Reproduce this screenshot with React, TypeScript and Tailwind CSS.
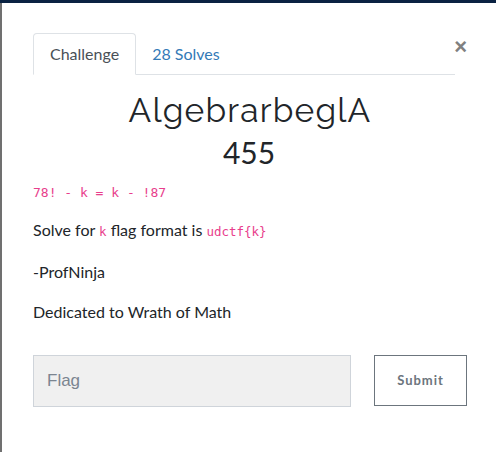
import React from "react";

export default function App() {
  return (
    <div className="w-[496px] h-[452px] bg-white flex flex-col overflow-hidden" style={{ fontFamily: "Lato, 'Noto Sans', sans-serif" }}>
      <div className="h-[3px] w-full bg-[#0a2242] shrink-0" />
      <div className="flex-1 flex border-l-2 border-[#707070]">
        <div className="flex-1 flex flex-col pl-[31px] pr-[30px] pt-[30px]">
          <div className="flex items-start">
            <div className="flex flex-1 border-b border-[#dee2e6] h-[42px]">
              <div className="h-[42px] px-[16px] flex items-center border border-[#dee2e6] border-b-white rounded-t-[4px] bg-white text-[#495057] text-[16px] -mb-px">
                Challenge
              </div>
              <div className="h-[41px] px-[16px] flex items-center text-[#337ab7] text-[16px]">
                28 Solves
              </div>
            </div>
            <div className="w-[12px] mt-[3px] text-[#808080] text-[22px] leading-none font-bold flex justify-end" style={{ fontFamily: "Arial, 'Liberation Sans', sans-serif" }}>
              ×
            </div>
          </div>
          <div className="text-center mt-[16px] text-[33.5px] leading-[40px] text-[#212529] tracking-[1.2px]" style={{ fontFamily: "Raleway, Lato, sans-serif" }}>
            AlgebrarbeglA
          </div>
          <div className="text-center text-[30px] leading-[36px] text-[#212529] mt-[3px] pr-[2px]">455</div>
          <div className="mt-[13px] text-[#e83e8c] text-[13px] leading-[20px]" style={{ fontFamily: "'DejaVu Sans Mono', monospace" }}>
            78! - k = k - !87
          </div>
          <p className="mt-[15px] text-[16px] leading-[24px] text-[#212529]">
            Solve for <code className="text-[#e83e8c] text-[12.5px]" style={{ fontFamily: "'DejaVu Sans Mono', monospace" }}>k</code> flag format is <code className="text-[#e83e8c] text-[12.5px]" style={{ fontFamily: "'DejaVu Sans Mono', monospace" }}>udctf&#123;k&#125;</code>
          </p>
          <p className="mt-[16px] text-[16px] leading-[24px] text-[#212529]">-ProfNinja</p>
          <p className="mt-[16px] text-[16px] leading-[24px] text-[#212529]">Dedicated to Wrath of Math</p>
          <div className="flex mt-[31px] items-start">
            <div className="w-[318px] h-[52px] bg-[#f0f0f0] border border-[#cfd4da] flex items-center pl-[13px] text-[17px] text-[#7b8590]" style={{ fontFamily: "Arial, 'Liberation Sans', sans-serif" }}>
              Flag
            </div>
            <div className="ml-[23px] w-[93px] h-[51px] border border-[#6c757d] flex items-center justify-center text-[13px] font-bold text-[#6c757d] tracking-[1px]">
              Submit
            </div>
          </div>
        </div>
      </div>
    </div>
  );
}
